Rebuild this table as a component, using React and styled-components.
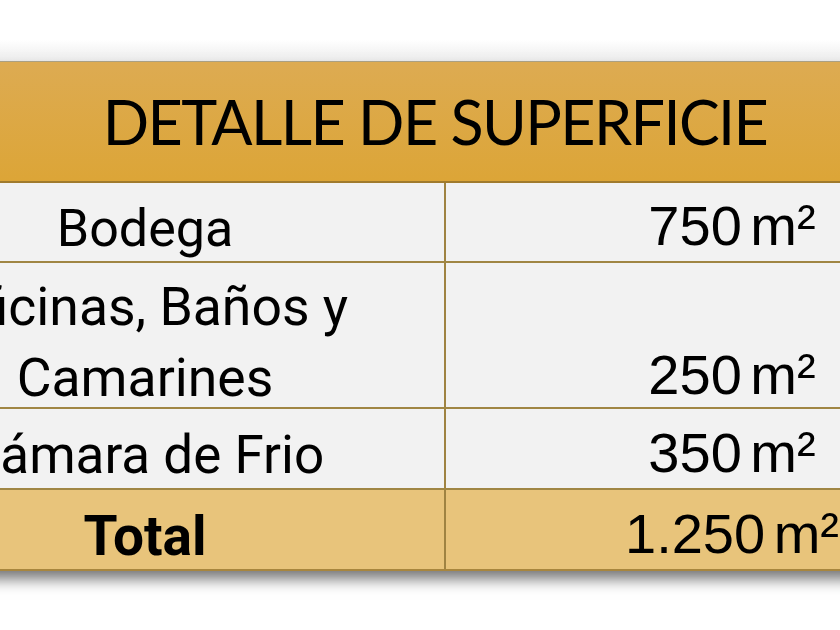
import React from "react";
import styled, { createGlobalStyle } from "styled-components";

const Global = createGlobalStyle`
  html, body { margin: 0; padding: 0; background: #ffffff; }
  body { overflow: hidden; width: 840px; height: 630px; }
`;

const Page = styled.div`
  width: 840px;
  height: 630px;
  overflow: hidden;
  padding-top: 61px;
  box-sizing: border-box;
  background: linear-gradient(#ffffff 0px, #ffffff 40px, #ececec 61px, #ffffff 61px);
`;

const Table = styled.div`
  width: 1172px;
  margin-left: -154px;
  display: flex;
  flex-direction: column;
  box-shadow: 0 10px 14px -2px rgba(0, 0, 0, 0.55);
`;

const Header = styled.div`
  height: 119px;
  border-top: 1px solid #aaa083;
  border-bottom: 2px solid #a07b2e;
  background: linear-gradient(#ddab52, #dca537);
  display: flex;
  align-items: center;
  justify-content: center;
  font-family: Lato, "Open Sans", sans-serif;
  font-size: 61px;
  font-weight: 400;
  color: #000;
  letter-spacing: -1.6px;
  padding-left: 6px;
`;

const Row = styled.div`
  display: grid;
  grid-template-columns: 600px 572px;
  height: ${(p) => p.$h}px;
  background: ${(p) => (p.$total ? "#e8c47b" : "#f2f2f2")};
  border-bottom: 2px solid ${(p) => (p.$total ? "#a8863e" : "#a08644")};
  box-sizing: border-box;
`;

const Label = styled.div`
  border-right: 2px solid #9f8342;
  display: flex;
  flex-direction: column;
  justify-content: flex-end;
  align-items: center;
  gap: 17px;
  text-align: center;
  padding-bottom: ${(p) => p.$pb}px;
  font-family: Roboto, "Noto Sans", sans-serif;
  font-size: ${(p) => p.$size}px;
  font-weight: ${(p) => (p.$bold ? 700 : 400)};
  line-height: 1;
  color: #000;
`;

const Line = styled.div`
  white-space: nowrap;
`;

const Value = styled.div`
  display: flex;
  align-items: flex-end;
  justify-content: center;
  padding-bottom: ${(p) => p.$pb}px;
  font-family: "Liberation Sans", Arial, sans-serif;
  font-size: 56px;
  line-height: 1;
  color: #000;
  word-spacing: -7px;
`;

const rows = [
  { label: ["Bodega"], value: "750 m²", h: 80, lpb: 6, vpb: 7, size: 52 },
  { label: ["Oficinas, Baños y", "Camarines"], value: "250 m²", h: 146, lpb: 3, vpb: 4, size: 53.5 },
  { label: ["Cámara de Frio"], value: "350 m²", h: 81, lpb: 6, vpb: 7, size: 53 },
  { label: ["Total"], value: "1.250 m²", h: 81, lpb: 5, vpb: 7, size: 55, bold: true, total: true },
];

export default function App() {
  return (
    <>
      <Global />
      <Page>
        <Table>
          <Header>DETALLE DE SUPERFICIE</Header>
          {rows.map((r, i) => (
            <Row key={i} $h={r.h} $total={r.total}>
              <Label $pb={r.lpb} $size={r.size} $bold={r.bold}>
                {r.label.map((t, j) => (
                  <Line key={j}>{t}</Line>
                ))}
              </Label>
              <Value $pb={r.vpb}>{r.value}</Value>
            </Row>
          ))}
        </Table>
      </Page>
    </>
  );
}
